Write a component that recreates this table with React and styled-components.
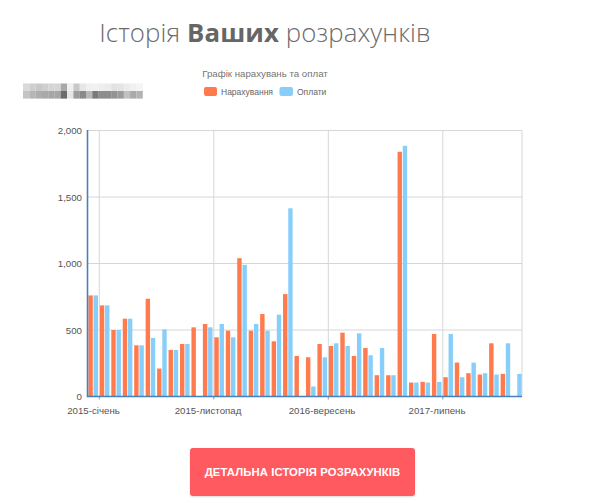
import React from "react";
import styled, { createGlobalStyle } from "styled-components";

const GlobalStyle = createGlobalStyle`
  html, body {
    margin: 0;
    padding: 0;
    background: #fff;
  }
  body {
    font-family: "Open Sans", "Liberation Sans", Arial, sans-serif;
  }
`;

const Page = styled.div`
  width: 600px;
  height: 503px;
  overflow: hidden;
  display: flex;
  flex-direction: column;
`;

const Column = styled.div`
  width: 530px;
  display: flex;
  flex-direction: column;
`;

const Title = styled.h1`
  margin: 0;
  padding-top: 15px;
  height: 60px;
  box-sizing: border-box;
  text-align: center;
  font-family: "Open Sans", "Liberation Sans", sans-serif;
  font-size: 25.8px;
  line-height: 34px;
  font-weight: 300;
  color: #6c6c6c;
  letter-spacing: 0.1px;

  b {
    font-weight: 700;
    color: #666;
  }
`;

const ButtonRow = styled.div`
  display: flex;
  justify-content: center;
  padding-left: 5px;
  margin-top: 23px;
`;

const DetailButton = styled.button`
  width: 225px;
  height: 48px;
  border: none;
  border-radius: 3px;
  background: #ff5a5f;
  box-shadow: 0 1px 2px rgba(0, 0, 0, 0.15);
  color: #fff;
  font-family: "Liberation Sans", Arial, sans-serif;
  font-weight: 700;
  font-size: 11.3px;
  letter-spacing: 0.1px;
  text-transform: uppercase;
  cursor: pointer;
`;

const ORANGE = "#ff7a4d";
const BLUE = "#87cefa";
const AXIS = "#4a80b8";
const OFF = 60; // svg top in page coords

const data = [
  [760, 760], [685, 685], [500, 500], [585, 585], [385, 385],
  [735, 440], [210, 505], [350, 350], [395, 395], [520, null],
  [545, 520], [445, 545], [495, 445], [1040, 990], [495, 545],
  [620, 495], [415, 615], [770, 1415], [305, null], [295, 75],
  [395, 295], [380, 400], [480, 380], [305, 475], [365, 310],
  [160, 365], [160, 160], [1840, 1885], [105, 105], [110, 105],
  [470, 110], [145, 470], [255, 145], [175, 255], [165, 175],
  [400, 165], [170, 400], [null, 170],
];

const LEFT = 88;
const RIGHT = 522;
const BASE = 396.5 - OFF;
const TOP = 130.5 - OFF;
const scale = (BASE - TOP) / 2000;
const vGrid = [99.3, 213.8, 328.3, 442.8];
const xLabels = [
  { x: 93.5, t: "2015-січень" },
  { x: 208, t: "2015-листопад" },
  { x: 322, t: "2016-вересень" },
  { x: 437, t: "2017-липень" },
];
const yTicks = [0, 500, 1000, 1500, 2000];

const blur = [
  ["#dadada", "#cfcfcf", "#c9c9c9", "#cfcfcf", "#d5d5d5", "#d5d5d5", "#a9a9a9", "#f0f0f0", "#c8c8c8", "#e6e6e6", "#f0f0f0", "#f1f1f1", "#eeeeee", "#ececec", "#e2e2e2", "#e4e4e4", "#ececec", "#f0f0f0", "#f4f4f4"],
  ["#c4c4c4", "#b6b6b6", "#aeaeae", "#a9a9a9", "#a6a6a6", "#a6a6a6", "#6b6b6b", "#e6e6e6", "#9c9c9c", "#8a8a8a", "#b8b8b8", "#7a7a7a", "#8d8d8d", "#8d8d8d", "#939393", "#9b9b9b", "#c0c0c0", "#a9a9a9", "#b3b3b3"],
];

const axisText = {
  fontFamily: "'Liberation Sans', Arial, sans-serif",
  fontSize: 9.7,
  fill: "#555",
};

function Chart() {
  return (
    <svg width="530" height="365" viewBox="0 0 530 365">
      {/* redacted account label */}
      {blur.map((row, r) =>
        row.map((c, i) => (
          <rect key={`b${r}-${i}`} x={23 + i * 6.3} y={23.5 + r * 7.5} width="6.4" height="7.6" fill={c} />
        ))
      )}

      <text x="265" y="17" textAnchor="middle" fontFamily="'Liberation Sans', Arial, sans-serif" fontSize="9.7" fill="#757575">
        Графік нарахувань та оплат
      </text>
      <rect x="204" y="27" width="13" height="9" rx="2" fill={ORANGE} />
      <text x="221" y="35" fontFamily="'Liberation Sans', Arial, sans-serif" fontSize="8.5" fill="#666">Нарахування</text>
      <rect x="279.5" y="27" width="13.5" height="9" rx="2" fill={BLUE} />
      <text x="297" y="35" fontFamily="'Liberation Sans', Arial, sans-serif" fontSize="8.5" fill="#666">Оплати</text>

      {yTicks.map((v) => {
        const y = BASE - v * scale;
        return (
          <g key={v}>
            {v > 0 && <line x1={LEFT} x2={RIGHT} y1={y} y2={y} stroke="#d6d6d6" strokeWidth="1" />}
            <text x="82" y={y + 3.5} textAnchor="end" {...axisText}>
              {v.toLocaleString("en-US")}
            </text>
          </g>
        );
      })}
      {vGrid.map((x) => (
        <g key={x}>
          <line x1={x} x2={x} y1={TOP} y2={BASE} stroke="#d6d6d6" strokeWidth="1" />
          <line x1={x} x2={x} y1={BASE} y2={BASE + 3} stroke="#999" strokeWidth="1" />
        </g>
      ))}
      <line x1={RIGHT} x2={RIGHT} y1={TOP} y2={BASE} stroke="#d6d6d6" strokeWidth="1" />

      {data.map(([o, b], i) => {
        const x = LEFT + 0.4 + 11.45 * i;
        return (
          <g key={i}>
            {o != null && <rect x={x} y={BASE - o * scale} width="4.4" height={o * scale} fill={ORANGE} />}
            {b != null && <rect x={x + 5.2} y={BASE - b * scale} width="4.4" height={b * scale} fill={BLUE} />}
          </g>
        );
      })}

      <line x1={LEFT - 0.5} x2={RIGHT} y1={BASE} y2={BASE} stroke={AXIS} strokeWidth="1.6" />
      <line x1={LEFT - 0.5} x2={LEFT - 0.5} y1={TOP - 0.5} y2={BASE + 0.8} stroke={AXIS} strokeWidth="1.6" />

      {xLabels.map((l) => (
        <text key={l.t} x={l.x} y={BASE + 17} textAnchor="middle" {...axisText}>
          {l.t}
        </text>
      ))}
    </svg>
  );
}

export default function App() {
  return (
    <Page>
      <GlobalStyle />
      <Column>
        <Title>
          Історія <b>Ваших</b> розрахунків
        </Title>
        <Chart />
      </Column>
      <ButtonRow>
        <DetailButton>Детальна історія розрахунків</DetailButton>
      </ButtonRow>
    </Page>
  );
}
